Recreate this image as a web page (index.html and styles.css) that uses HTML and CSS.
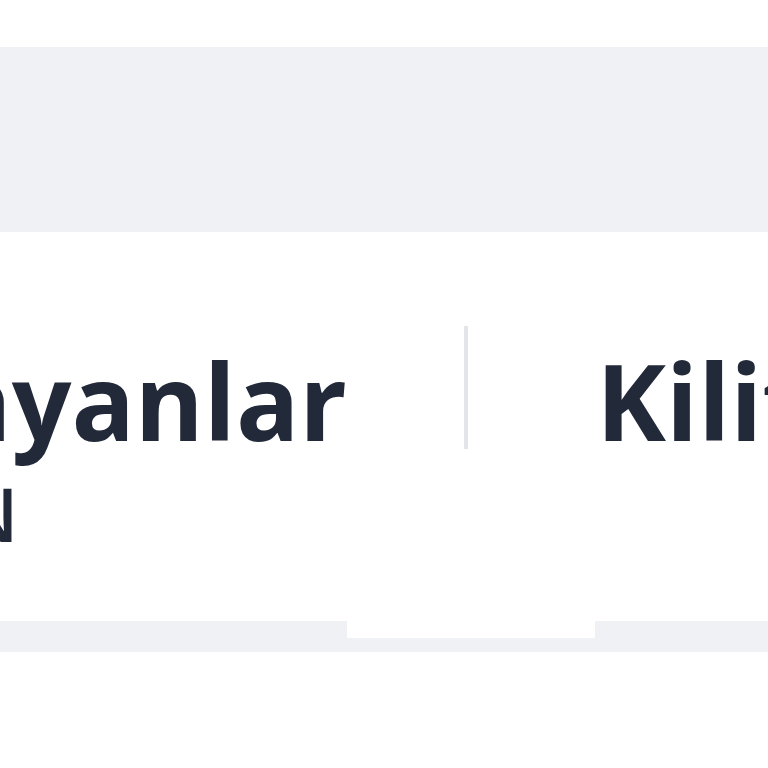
FILE: index.html
```html
<!DOCTYPE html>
<html lang="tr">
<head>
<meta charset="utf-8">
<title>İstatistikler</title>
<link rel="stylesheet" href="styles.css">
</head>
<body>
  <header class="topbar"></header>
  <section class="band"></section>
  <section class="stats">
    <div class="stat stat-left">
      <div class="stat-title">Onaylanmayanlar</div>
      <div class="stat-sub">ÖDEYEN</div>
    </div>
    <div class="divider"></div>
    <div class="stat stat-right">
      <div class="stat-title">Kilitli Kullanıcılar</div>
      <div class="stat-sub muted">HESAP</div>
    </div>
  </section>
  <nav class="tabs">
    <div class="tab active"></div>
  </nav>
</body>
</html>
```

FILE: styles.css
```css
html, body {
  margin: 0;
  padding: 0;
  background: #ffffff;
  overflow: hidden;
  font-family: "Open Sans", "Liberation Sans", sans-serif;
}

.topbar {
  height: 47px;
  background: #ffffff;
}

.band {
  height: 185px;
  background: #f0f1f5;
}

.stats {
  height: 389px;
  box-sizing: border-box;
  padding-top: 94px;
  background: #ffffff;
  display: flex;
  align-items: flex-start;
  overflow: hidden;
}

.stat {
  flex: none;
  width: 700px;
  display: flex;
  flex-direction: column;
  align-items: center;
}

.stat-left {
  margin-left: -474px;
}

.divider {
  flex: none;
  width: 4px;
  height: 123px;
  margin: 0 228px 0 238px;
  background: #e4e5e9;
}

.stat-title {
  margin-top: 12px;
  font-size: 105px;
  line-height: 126px;
  font-weight: 700;
  color: #222938;
  white-space: nowrap;
}

.stat-sub {
  margin-top: 4px;
  font-size: 75px;
  line-height: 90px;
  font-weight: 600;
  letter-spacing: -4px;
  color: #222938;
  white-space: nowrap;
}

.stat-sub.muted {
  color: #9aa0ab;
}

.tabs {
  height: 31px;
  background: #f0f1f5;
  display: flex;
  padding-left: 347px;
}

.tab {
  width: 248px;
  height: 17px;
}

.tab.active {
  background: #ffffff;
}
```
